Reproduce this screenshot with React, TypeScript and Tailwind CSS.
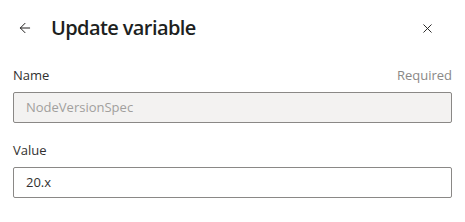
import { ArrowLeft, X } from 'lucide-react';

export default function App() {
  return (
    <div className="w-[465px] h-[222px] bg-white text-[#323130] font-['Open_Sans',sans-serif]">
      <div className="flex items-center h-[56px] pl-[17px] pr-[30px]">
        <button className="flex items-center justify-center w-[16px] h-[16px] text-[#201f1e]">
          <ArrowLeft className="w-[16px] h-[16px]" strokeWidth={1.5} />
        </button>
        <h1 className="ml-[18px] text-[20px] font-semibold tracking-[-0.6px] text-[#201f1e]">Update variable</h1>
        <button className="ml-auto flex items-center justify-center w-[16px] h-[16px] text-[#201f1e]">
          <X className="w-[15px] h-[15px]" strokeWidth={1.5} />
        </button>
      </div>
      <div className="px-[13px] mt-[10px] flex flex-col">
        <div className="flex items-center justify-between h-[20px] text-[13px]">
          <span className="text-[#323130]">Name</span>
          <span className="text-[#8a8886]">Required</span>
        </div>
        <div className="mt-[6px] h-[31px] flex items-center px-[12px] border border-[#8a8886] rounded-[2px] bg-[#f3f2f1] text-[13px] text-[#a19f9d]">
          NodeVersionSpec
        </div>
        <div className="mt-[18px] flex items-center h-[20px] text-[13px]">
          <span>Value</span>
        </div>
        <div className="mt-[6px] h-[31px] flex items-center px-[12px] border border-[#8a8886] rounded-[2px] bg-white text-[13px] text-[#323130]">
          20.x
        </div>
      </div>
    </div>
  );
}
